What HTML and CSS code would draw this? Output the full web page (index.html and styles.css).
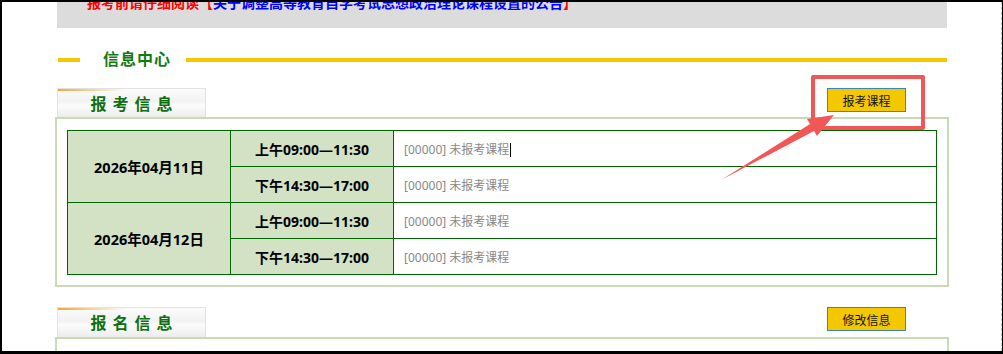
FILE: index.html
```html
<!DOCTYPE html>
<html lang="zh-CN">
<head>
    <meta charset="UTF-8">
    <title>信息中心</title>
    <link rel="stylesheet" href="styles.css">
</head>
<body>
<div class="frame">
    <div class="page">
        <div class="wrap">
            <div class="notice">
                <span class="red">报考前请仔细阅读【</span><a class="blue" href="#">关于调整高等教育自学考试思想政治理论课程设置的公告</a><span class="red">】</span>
            </div>

            <div class="heading">
                <span class="hline short"></span>
                <span class="htext">信息中心</span>
                <span class="hline long"></span>
            </div>

            <!-- 报考信息 -->
            <div class="bar">
                <div class="tab">报考信息</div>
                <button class="btn">报考课程</button>
            </div>
            <div class="box">
                <table class="tab1" cellspacing="0">
                    <tr>
                        <td class="day" rowspan="2">2026年04月11日</td>
                        <td class="time">上午09:00—11:30</td>
                        <td class="course">[00000] 未报考课程<span class="caret"></span></td>
                    </tr>
                    <tr>
                        <td class="time">下午14:30—17:00</td>
                        <td class="course">[00000] 未报考课程</td>
                    </tr>
                    <tr>
                        <td class="day" rowspan="2">2026年04月12日</td>
                        <td class="time">上午09:00—11:30</td>
                        <td class="course">[00000] 未报考课程</td>
                    </tr>
                    <tr>
                        <td class="time">下午14:30—17:00</td>
                        <td class="course">[00000] 未报考课程</td>
                    </tr>
                </table>
            </div>

            <!-- 报名信息 -->
            <div class="bar bar2">
                <div class="tab">报名信息</div>
                <button class="btn">修改信息</button>
            </div>
            <div class="box box2"></div>
        </div>

        <!-- 标注 -->
        <div class="mark"></div>
        <svg class="arrow" width="1003" height="354" viewBox="0 0 1003 354">
            <polygon fill="#f25757" points="721,180 810,124 807,119 834,115 817,136 814,131"/>
        </svg>
    </div>
</div>
</body>
</html>
```

FILE: styles.css
```css
body{
    margin: 0;
    font-family: "Noto Sans", "Noto Sans CJK SC", sans-serif;
}
.frame{
    width: 1003px;
    height: 354px;
    box-sizing: border-box;
    border-top: 2px solid #000;
    border-left: 2px solid #000;
    border-bottom: 3px solid #000;
    border-right: 1px solid #000;
    overflow: hidden;
    background: #fff;
}
.page{
    position: relative;
    display: flow-root;
    height: 100%;
    border-right: 1px dashed #b9d3a6;
}
.wrap{
    width: 894px;
    margin-left: 53px;
}
.notice{
    margin: -10px 2px 0;
    padding: 0 0 16px 30px;
    line-height: 20px;
    background-color: #dcdcdc;
    font-family: "Noto Sans CJK SC", sans-serif;
    font-size: 14px;
    font-weight: bold;
    white-space: nowrap;
}
.red{
    color: #ff0000;
}
.blue{
    color: #0000ff;
    text-decoration: none;
}

.heading{
    display: flex;
    align-items: center;
    height: 34px;
    margin-top: 15px;
    padding: 0 2px 0 3px;
}
.hline{
    height: 4px;
    background-color: #f7c600;
}
.short{
    width: 22px;
}
.long{
    flex: 1;
}
.htext{
    padding: 0 15px 5px 23px;
    line-height: 20px;
    color: #127a12;
    font-family: "Noto Sans CJK SC", sans-serif;
    font-size: 16px;
    font-weight: bold;
    letter-spacing: 1px;
}

.bar{
    display: flex;
    justify-content: space-between;
    align-items: flex-start;
    height: 29px;
    margin-top: 11px;
    padding: 0 43px 0 2px;
}
.bar2{
    margin-top: 20px;
    height: 30px;
}
.tab{
    width: 149px;
    height: 100%;
    box-sizing: border-box;
    border: 1px solid #e2e2e2;
    border-bottom: 0;
    background:
        linear-gradient(to right, #f3a733, rgba(255,255,255,0) 45%) top / 100% 2px no-repeat,
        linear-gradient(to bottom, #fbfbfb 0%, #f2f2f2 45%, #fcfcfc 58%, #ececec 100%);
    text-align: center;
    line-height: 28px;
    color: #0d700d;
    font-family: "Noto Sans CJK SC", sans-serif;
    font-size: 16px;
    font-weight: bold;
    letter-spacing: 6px;
    text-indent: 6px;
}
.btn{
    width: 79px;
    height: 24px;
    padding: 0;
    border: 1px solid #3b86b5;
    background-color: #f3c800;
    color: #111;
    font-family: "Noto Sans CJK SC", sans-serif;
    font-size: 12px;
}

.box{
    border: 2px solid #c9dbb5;
    padding: 11px 10px 10px;
}
.box2{
    height: 100px;
}
.tab1{
    width: 100%;
    border-collapse: collapse;
    font-size: 14px;
}
.tab1 td{
    height: 35px;
    padding: 0;
    border: 1px solid #006600;
}
.day, .time{
    width: 162px;
    background-color: #d3e1c5;
    text-align: center;
    font-weight: bold;
    color: #000;
}
.day{
    font-size: 14.5px;
}
.course{
    padding-left: 10px !important;
    color: #888;
    font-size: 12px;
}
.caret{
    display: inline-block;
    width: 1px;
    height: 14px;
    margin-left: 1px;
    vertical-align: middle;
    background-color: #000;
}

.mark{
    position: absolute;
    left: 809px;
    top: 73px;
    width: 106px;
    height: 47px;
    border: 4px solid #f25757;
    border-radius: 2px;
}
.arrow{
    position: absolute;
    left: -2px;
    top: -2px;
    pointer-events: none;
}
```
